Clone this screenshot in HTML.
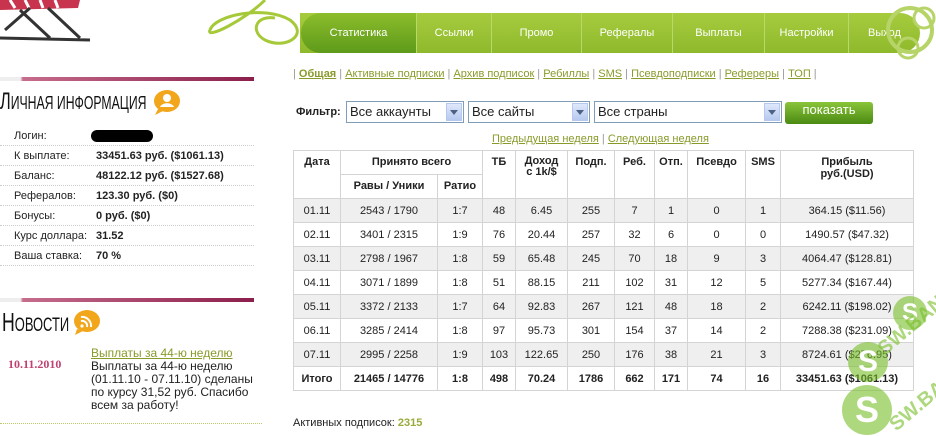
<!DOCTYPE html>
<html><head><meta charset="utf-8"><style>
*{margin:0;padding:0;box-sizing:border-box}
body{width:936px;height:432px;overflow:hidden;background:#fff;font-family:"Liberation Sans",sans-serif;font-size:11px;color:#222;position:relative}
.abs{position:absolute;white-space:nowrap}
.nav{position:absolute;left:300px;top:13px;width:620px;height:40px;background:linear-gradient(#a6cc3e,#8fb92c);border-radius:0 20px 20px 0}
.nav div{position:absolute;top:0;height:40px;line-height:40px;color:#fff;font-size:11px;text-align:center;border-left:1px solid #b9d96a}
.sub{left:293px;top:68px;color:#999;font-size:11px}
.sub a{color:#8a9a2a;text-decoration:underline}
a{color:#8a9a2a}
.info{position:absolute;left:0;width:254px;border-bottom:1px dotted #ccc;height:20px;line-height:20px;white-space:nowrap}
.info span{position:absolute;left:14px}
.info b{position:absolute;left:96px}
.sel{position:absolute;top:101px;height:22px;border:1px solid #7f9db9;background:#fff;font-size:13px;line-height:20px;padding-left:3px}
.sel i{position:absolute;right:1px;top:1px;width:16px;height:18px;background:linear-gradient(#dfe8fb,#b7c9f0);border:1px solid #b6c8ef}
.sel i:after{content:"";position:absolute;left:3px;top:6px;border:4px solid transparent;border-top:5px solid #4d6185}
table{position:absolute;left:293px;top:150px;width:621px;border-collapse:collapse;font-size:11px}
td,th{border:1px solid #d4d4d4;text-align:center;height:24px;padding:0;white-space:nowrap}
th{font-weight:bold;vertical-align:top;padding-top:5px}
tr.g td{background:#efefef}
.wm{position:absolute;border-radius:50%;background:rgba(120,190,40,.6);color:#fff;font:bold 40px "Liberation Sans",sans-serif;text-align:center}
</style></head><body>
<svg class="abs" style="left:0;top:0" width="100" height="45"><path d="M0 0 L80 0 L78 8 L0 10Z" fill="#c8344e"/><path d="M10 0l5 8M25 0l4 8M40 0l3 8M55 0l3 8" stroke="#fff" stroke-width="3"/><path d="M5 30 L30 8 M20 10 L50 38 M48 8 L80 38 M0 38 L90 40" stroke="#333" stroke-width="3" fill="none"/></svg>
<svg class="abs" style="left:205px;top:0" width="110" height="55"><path d="M60 0 C40 20 0 40 5 30 C10 15 60 5 85 20 C105 35 80 50 60 40 C45 32 50 15 70 18" stroke="#a6c93a" stroke-width="3" fill="none"/></svg>
<div class="nav">
<div style="left:1px;width:115px;background:linear-gradient(#8cbd2c,#5e9a1a);border:none;border-radius:20px 0 0 20px">Статистика</div>
<div style="left:116px;width:75px">Ссылки</div>
<div style="left:191px;width:90px">Промо</div>
<div style="left:281px;width:91px">Рефералы</div>
<div style="left:372px;width:92px">Выплаты</div>
<div style="left:464px;width:84px">Настройки</div>
<div style="left:548px;width:72px">Выход</div>
</div>
<svg class="abs" style="left:880px;top:0" width="56" height="62"><circle cx="30" cy="30" r="22" fill="none" stroke="#b6d468" stroke-width="4"/><circle cx="44" cy="18" r="10" fill="none" stroke="#b6d468" stroke-width="3"/><circle cx="28" cy="48" r="10" fill="none" stroke="#b6d468" stroke-width="3"/></svg>
<div class="abs" style="left:0;top:77px;width:254px;height:4px;background:linear-gradient(90deg,#eee 8%,#c66c8c 9%,#8c1f4c)"></div>
<div class="abs" style="left:0;top:88px;font-family:'Liberation Sans Narrow','Liberation Sans',sans-serif;font-size:24px;transform:scaleX(.68);transform-origin:left;color:#111">Л<span style="font-size:18px">ИЧНАЯ ИНФОРМАЦИЯ</span></div>
<svg class="abs" style="left:153px;top:89px" width="28" height="26"><ellipse cx="14" cy="12" rx="13" ry="11" fill="#f2a61c"/><path d="M5 20l-3 6 8-4" fill="#f2a61c"/><circle cx="14" cy="9" r="4" fill="#fff"/><path d="M7 18c2-5 12-5 14 0z" fill="#fff"/></svg>
<div class="info" style="top:126px"><span>Логин:</span><b style="width:62px;height:12px;top:4px;background:#000;border-radius:6px;left:91px"></b></div>
<div class="info" style="top:146px"><span>К выплате:</span><b>33451.63 руб. ($1061.13)</b></div>
<div class="info" style="top:166px"><span>Баланс:</span><b>48122.12 руб. ($1527.68)</b></div>
<div class="info" style="top:186px"><span>Рефералов:</span><b>123.30 руб. ($0)</b></div>
<div class="info" style="top:206px"><span>Бонусы:</span><b>0 руб. ($0)</b></div>
<div class="info" style="top:226px"><span>Курс доллара:</span><b>31.52</b></div>
<div class="info" style="top:246px"><span>Ваша ставка:</span><b>70 %</b></div>
<div class="abs" style="left:0;top:298px;width:254px;height:4px;background:linear-gradient(90deg,#eee 8%,#c66c8c 9%,#8c1f4c)"></div>
<div class="abs" style="left:2px;top:307px;font-family:'Liberation Sans',sans-serif;font-size:26px;transform:scaleX(.68);transform-origin:left;color:#111">Н<span style="font-size:19px">ОВОСТИ</span></div>
<svg class="abs" style="left:73px;top:309px" width="28" height="26"><ellipse cx="14" cy="12" rx="13" ry="11" fill="#f2a61c"/><path d="M4 20l-2 6 8-4" fill="#f2a61c"/><path d="M8 8a9 9 0 0 1 10 10M8 12a5 5 0 0 1 6 6" stroke="#fff" stroke-width="2" fill="none"/><circle cx="9" cy="17" r="1.6" fill="#fff"/></svg>
<div class="abs" style="left:8px;top:357px;color:#c04070;font:bold 12px 'Liberation Serif',serif">10.11.2010</div>
<div class="abs" style="left:91px;top:347px;font-size:12px;line-height:13px;white-space:normal;width:172px"><a style="text-decoration:underline">Выплаты за 44-ю неделю</a><br>Выплаты за 44-ю неделю (01.11.10 - 07.11.10) сделаны по курсу 31,52 руб. Спасибо всем за работу!</div>
<div class="abs" style="left:0;top:423px;width:262px;border-top:1px dotted #bbcc66"></div>
<div class="abs sub">| <a style="font-weight:bold">Общая</a> | <a>Активные подписки</a> | <a>Архив подписок</a> | <a>Ребиллы</a> | <a>SMS</a> | <a>Псевдоподписки</a> | <a>Рефереры</a> | <a>ТОП</a> |</div>
<div class="abs" style="left:296px;top:106px;font-weight:bold">Фильтр:</div>
<div class="sel" style="left:346px;width:118px">Все аккаунты<i></i></div>
<div class="sel" style="left:468px;width:122px">Все сайты<i></i></div>
<div class="sel" style="left:594px;width:188px">Все страны<i></i></div>
<div class="abs" style="left:785px;top:102px;width:88px;height:22px;border-radius:3px;background:linear-gradient(#8ac43a,#4a8a12);color:#fff;text-align:center;line-height:21px;font:13px 'Liberation Sans Narrow','Liberation Sans',sans-serif">показать</div>
<div class="abs" style="left:492px;top:133px;color:#999"><a style="text-decoration:underline">Предыдущая неделя</a> | <a style="text-decoration:underline">Следующая неделя</a></div>
<table>
<tr><th rowspan="2" style="width:47px">Дата</th><th colspan="2">Принято всего</th><th rowspan="2" style="width:33px">ТБ</th><th rowspan="2" style="width:52px;line-height:11px">Доход<br>с 1k/$</th><th rowspan="2" style="width:47px">Подп.</th><th rowspan="2" style="width:40px">Реб.</th><th rowspan="2" style="width:33px">Отп.</th><th rowspan="2" style="width:58px">Псевдо</th><th rowspan="2" style="width:35px">SMS</th><th rowspan="2" style="line-height:12px">Прибыль<br>руб.(USD)</th></tr>
<tr><th style="width:97px">Равы / Уники</th><th style="width:45px">Ратио</th></tr>
<tr class="g"><td>01.11</td><td>2543 / 1790</td><td>1:7</td><td>48</td><td>6.45</td><td>255</td><td>7</td><td>1</td><td>0</td><td>1</td><td>364.15 ($11.56)</td></tr>
<tr><td>02.11</td><td>3401 / 2315</td><td>1:9</td><td>76</td><td>20.44</td><td>257</td><td>32</td><td>6</td><td>0</td><td>0</td><td>1490.57 ($47.32)</td></tr>
<tr class="g"><td>03.11</td><td>2798 / 1967</td><td>1:8</td><td>59</td><td>65.48</td><td>245</td><td>70</td><td>18</td><td>9</td><td>3</td><td>4064.47 ($128.81)</td></tr>
<tr><td>04.11</td><td>3071 / 1899</td><td>1:8</td><td>51</td><td>88.15</td><td>211</td><td>102</td><td>31</td><td>12</td><td>5</td><td>5277.34 ($167.44)</td></tr>
<tr class="g"><td>05.11</td><td>3372 / 2133</td><td>1:7</td><td>64</td><td>92.83</td><td>267</td><td>121</td><td>48</td><td>18</td><td>2</td><td>6242.11 ($198.02)</td></tr>
<tr><td>06.11</td><td>3285 / 2414</td><td>1:8</td><td>97</td><td>95.73</td><td>301</td><td>154</td><td>37</td><td>14</td><td>2</td><td>7288.38 ($231.09)</td></tr>
<tr class="g"><td>07.11</td><td>2995 / 2258</td><td>1:9</td><td>103</td><td>122.65</td><td>250</td><td>176</td><td>38</td><td>21</td><td>3</td><td>8724.61 ($276.95)</td></tr>
<tr style="font-weight:bold"><td>Итого</td><td>21465 / 14776</td><td>1:8</td><td>498</td><td>70.24</td><td>1786</td><td>662</td><td>171</td><td>74</td><td>16</td><td>33451.63 ($1061.13)</td></tr>
</table>
<div class="abs" style="left:293px;top:417px">Активных подписок: <b style="color:#9aaa3a">2315</b></div>
<div class="wm" style="left:893px;top:296px;width:34px;height:34px;line-height:34px;font-size:24px">S</div>
<div class="wm" style="left:848px;top:342px;width:40px;height:40px;line-height:40px;font-size:30px">S</div>
<div class="wm" style="left:842px;top:385px;width:50px;height:50px;line-height:50px;font-size:36px">S</div>
<div class="abs" style="left:870px;top:310px;color:rgba(120,190,40,.6);font:bold 20px 'Liberation Sans',sans-serif;transform:rotate(-40deg)">SW.BAND</div>
<div class="abs" style="left:885px;top:395px;color:rgba(120,190,40,.6);font:bold 20px 'Liberation Sans',sans-serif;transform:rotate(-40deg)">SW.BA</div>
</body></html>
